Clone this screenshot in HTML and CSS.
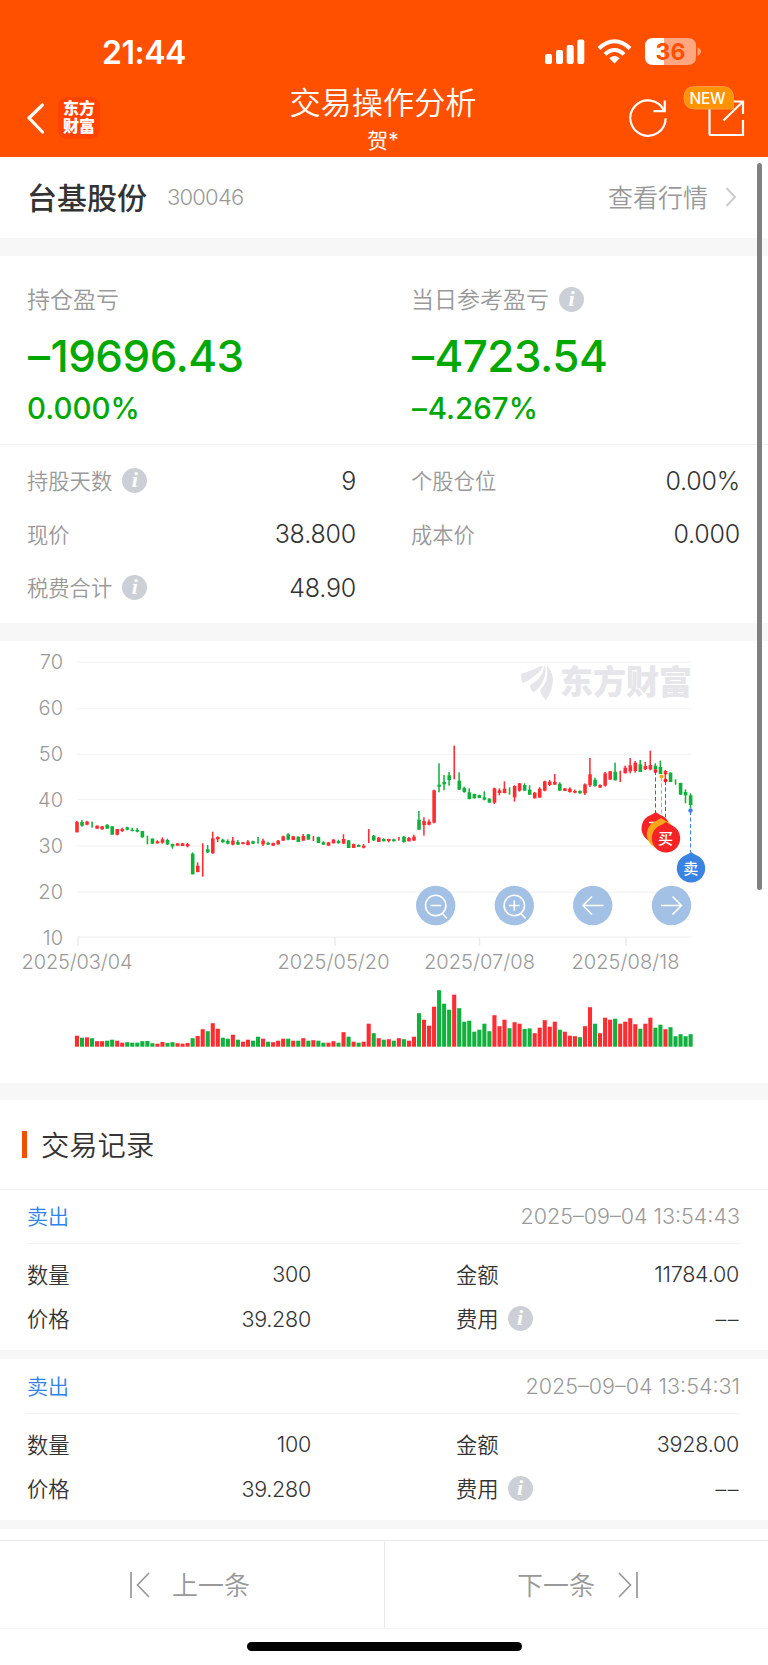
FILE: index.html
```html
<!DOCTYPE html>
<html lang="zh-CN">
<head>
<meta charset="utf-8">
<title>交易操作分析</title>
<link rel="stylesheet" href="styles.css">
</head>
<body>
<div class="page">
  <header class="header">
    <div class="status">
      <span class="clock">21:44</span>
      <svg class="status-icons" width="160" height="30" viewBox="544 36 160 30">
        <g fill="#fff">
          <rect x="545" y="54" width="7" height="10" rx="2"/>
          <rect x="556" y="50" width="7" height="14" rx="2"/>
          <rect x="566.7" y="45" width="7" height="19" rx="2"/>
          <rect x="577.3" y="39.5" width="7" height="24.5" rx="2"/>
          <path d="M614.5 63.5L609.3 58.3Q614.5 53.8 619.7 58.3Z"/>
        </g>
        <g fill="none" stroke="#fff" stroke-width="4">
          <path d="M599 48.5Q606.2 41.2 614.5 41.2T630 48.5"/>
          <path d="M605 54.4Q609.4 50 614.5 50T624 54.4"/>
        </g>
        <path d="M664 38H653.500Q645 38 645 46V57Q645 65 653.500 65H664Z" fill="#fff"/>
        <path d="M664 38H687.500Q696 38 696 46V57Q696 65 687.500 65H664Z" fill="#ffa780"/>
        <path d="M697.500 47.500Q701 49 701 51.500T697.500 56Z" fill="#ffa780"/>
        <text x="670.500" y="60" text-anchor="middle" class="battery">36</text>
      </svg>
    </div>
    <nav class="titlebar">
      <div class="side">
        <svg class="back" width="20" height="34" viewBox="0 0 20 34"><path d="M18.500 4L5 17L18.500 31" fill="none" stroke="#fff" stroke-width="3.200" stroke-linecap="round" stroke-linejoin="round"/></svg>
        <span class="brand">东方<br>财富</span>
      </div>
      <div class="heading"><h1>交易操作分析</h1><p>贺*</p></div>
      <svg class="actions" width="146" height="64" viewBox="622 82 146 64">
        <g fill="none" stroke="#fff" stroke-width="2.200">
          <path d="M664 110.500A17.700 17.700 0 1 0 665.700 118.300"/>
          <path d="M664.800 100.500V111.200H653.500"/>
          <path d="M709.500 106V133.500Q709.500 135 711 135H743V120M743 114V101.500H730M743 101.500L723.500 120.500"/>
        </g>
        <path d="M695 86.500H722Q733.500 86.500 733.500 98V109H695Q684 109 684 97.700T695 86.500Z" fill="#ff9300" stroke="#ff9a40" stroke-width="1"/>
        <text x="707.500" y="103.800" text-anchor="middle" textLength="36" class="new">NEW</text>
      </svg>
    </nav>
  </header>

  <section class="stock">
    <b>台基股份</b><span class="code">300046</span>
    <a class="quote">查看行情<svg width="12" height="22" viewBox="0 0 12 22"><path d="M1.500 2L10 11L1.500 20" fill="none" stroke="#ccc" stroke-width="2"/></svg></a>
  </section>

  <section class="summary">
    <div><div class="cap">持仓盈亏</div><div class="big"><span class="minus">–</span>19696.43</div><div class="pct">0.000%</div></div>
    <div><div class="cap">当日参考盈亏<i class="info">i</i></div><div class="big"><span class="minus">–</span>4723.54</div><div class="pct"><span class="minus">–</span>4.267%</div></div>
  </section>
  <section class="facts">
    <div class="fact"><span>持股天数<i class="info">i</i></span><em>9</em></div>
    <div class="fact"><span>个股仓位</span><em>0.00%</em></div>
    <div class="fact"><span>现价</span><em>38.800</em></div>
    <div class="fact"><span>成本价</span><em>0.000</em></div>
    <div class="fact"><span>税费合计<i class="info">i</i></span><em>48.90</em></div>
  </section>

  <section class="chart">
    <svg width="768" height="442" viewBox="0 641 768 442">
      <path d="M77 662.300H691M77 708.500H691M77 754.500H691M77 799.500H691M77 846H691M77 892.200H691M77 937H691" stroke="#f5f5f5" stroke-width="1.500" fill="none"/>
      <path d="M78 937V946M335 937V946M479.500 937V946M626 937V946" stroke="#ececec" stroke-width="1.500"/>
      <g class="axis" text-anchor="end">
        <text x="63" y="669">70</text><text x="63" y="715">60</text><text x="63" y="761">50</text><text x="63" y="807">40</text>
        <text x="63" y="852.500">30</text><text x="63" y="898.500">20</text><text x="63" y="944.500">10</text>
      </g>
      <g class="axis" text-anchor="middle">
        <text x="77" y="969" textLength="111">2025/03/04</text><text x="333.500" y="969" textLength="112">2025/05/20</text>
        <text x="479.500" y="969" textLength="111">2025/07/08</text><text x="625.500" y="969" textLength="108">2025/08/18</text>
      </g>
      <g fill="#e5e5ea">
        <path d="M521.500 674Q532 672 540 666Q536 678 523 683Q521 679 521.500 674Z"/>
        <path d="M521.500 674Q530 671 543 665.500Q541 674 522.500 683Q521 679 521.500 674Z"/>
        <path d="M544 665Q543.500 678 530 685Q530.500 690 533.500 692.500Q546 683 545.500 668Z"/>
        <path d="M547 665.500Q549.500 681 540 690.500Q541.500 696 546 700Q553 690 553 679Q552 671 547 665.500Z"/>
        <text x="560" y="694" textLength="132" lengthAdjust="spacingAndGlyphs" class="watermark">东方财富</text>
      </g>
      <g id="candles"></g>
      <g id="volumes"></g>

      <g fill="none" stroke-width="1" stroke-dasharray="4 2.500">
        <path d="M655.500 771V813" stroke="#f52326"/><path d="M661.500 777V818" stroke="#f8a51b"/><path d="M665.500 781V820" stroke="#f52326"/><path d="M690.500 811V852" stroke="#3983e2"/>
      </g>
      <circle cx="655.500" cy="771" r="2" fill="#f52326"/><circle cx="661.500" cy="776.500" r="2" fill="#f8a51b"/><circle cx="665.500" cy="780.500" r="2" fill="#f52326"/><circle cx="690.500" cy="810.500" r="2.200" fill="#3983e2"/>
      <defs><path id="pin" d="M0-16Q3-13.500 8-11.500A14.200 14.200 0 1 1-8-11.500Q-3-13.500 0-16Z"/></defs>
      <g class="pin-text" text-anchor="middle">
        <use href="#pin" x="655.700" y="828" fill="#f52326"/><path d="M649 822.500H657" stroke="#fff" stroke-width="1.500"/>
        <use href="#pin" x="661" y="834" fill="#f8a51b"/>
        <use href="#pin" x="666" y="838" fill="#f52326"/><text x="665.500" y="843.500">买</text>
        <use href="#pin" x="691" y="868" fill="#3983e2"/><text x="690.800" y="873.500">卖</text>
      </g>
      <g fill="#a3c1e4"><circle cx="435.700" cy="905.500" r="19.700"/><circle cx="514.300" cy="905.500" r="19.700"/><circle cx="592.700" cy="905.500" r="19.700"/><circle cx="671.500" cy="905.500" r="19.700"/></g>
      <g fill="none" stroke="#fff" stroke-width="1.600">
        <circle cx="435.700" cy="905.500" r="10.200"/><path d="M430.500 905.500H441M442.500 913.500L447 918.500"/>
        <circle cx="514.300" cy="905.500" r="10.200"/><path d="M509 905.500H519.500M514.300 900.300V910.800M521 913.500L525.500 918.500"/>
        <path d="M603.500 905.500H583M592 896.500L583 905.500L592 914.500M661 905.500H681.500M672.500 896.500L681.500 905.500L672.500 914.500"/>
      </g>
    </svg>
  </section>

  <h2 class="records-title">交易记录</h2>
  <article class="record">
    <div class="record-head"><span class="side-tag">卖出</span><time>2025–09–04 13:54:43</time></div>
    <div class="record-body">
      <div class="cell"><span>数量</span><em>300</em></div><div class="cell"><span>金额</span><em>11784.00</em></div>
      <div class="cell"><span>价格</span><em>39.280</em></div><div class="cell"><span>费用<i class="info">i</i></span><em class="none">––</em></div>
    </div>
  </article>
  <article class="record">
    <div class="record-head"><span class="side-tag">卖出</span><time>2025–09–04 13:54:31</time></div>
    <div class="record-body">
      <div class="cell"><span>数量</span><em>100</em></div><div class="cell"><span>金额</span><em>3928.00</em></div>
      <div class="cell"><span>价格</span><em>39.280</em></div><div class="cell"><span>费用<i class="info">i</i></span><em class="none">––</em></div>
    </div>
  </article>

  <footer class="footer">
    <div class="pager">
      <a class="prev"><svg width="22" height="28" viewBox="0 0 22 28"><path d="M2 1V27M20 2L8.500 14L20 26" fill="none" stroke="#999" stroke-width="1.700"/></svg><span>上一条</span></a>
      <a class="next"><span>下一条</span><svg width="22" height="28" viewBox="0 0 22 28"><path d="M20 1V27M2 2L13.500 14L2 26" fill="none" stroke="#999" stroke-width="1.700"/></svg></a>
    </div>
    <div class="home"></div>
  </footer>
  <div class="scrollbar"></div>
</div>
<script src="chart.js"></script>
</body>
</html>
```
FILE: styles.css
```css
* { box-sizing: border-box; }
body { margin: 0; background: #fff; font-family: Inter, "Noto Sans CJK SC", sans-serif; color: #333; }
h1, h2, p { margin: 0; font-weight: 400; }
em, time { font-style: normal; }
.page { position: relative; width: 768px; height: 1665px; display: flex; flex-direction: column; overflow: hidden; }

.header { height: 157px; background: #ff5000; color: #fff; flex: none; }
.status { height: 82px; display: flex; justify-content: space-between; padding: 36px 64px 0 102px; }
.clock { font-size: 32px; font-weight: 600; line-height: 33px; letter-spacing: -0.5px; }
.battery { font-size: 23px; font-weight: 700; fill: #ff5000; }
.titlebar { display: grid; grid-template-columns: 146px 1fr 146px; height: 75px; }
.side { display: flex; padding: 15px 0 0 24px; gap: 14px; }
.back { margin-top: 4px; }
.brand { width: 42px; height: 42px; border-radius: 9px; background: #ff4200; text-align: center; font-size: 16px; line-height: 17.500px; font-weight: 900; padding-top: 3px; }
.heading { text-align: center; padding: 1px 2px 0 0; }
.heading h1 { font-size: 31.200px; line-height: 40px; font-weight: 350; }
.heading p { font-size: 21px; line-height: 28px; margin-top: 4px; }
.actions { display: block; }
.new { font-size: 15.500px; font-weight: 500; fill: #fff; }

.stock { height: 99px; border-bottom: 18px solid #f7f7f7; display: flex; align-items: center; padding: 0 31px 3px 27px; flex: none; }
.stock b { font-size: 30px; font-weight: 500; }
.code { font-size: 22px; color: #999; margin: 2px 0 0 20px; font-weight: 300; letter-spacing: -0.8px; }
.quote { margin-left: auto; display: flex; align-items: center; font-size: 25px; color: #999; gap: 17px; font-weight: 350; }
.quote svg { margin-top: 1px; }

.summary { height: 189px; border-bottom: 1px solid #f3f3f3; display: grid; grid-template-columns: 384px 384px; padding: 28px 0 0; flex: none; }
.summary > div { padding-left: 27px; }
.cap { display: flex; align-items: center; font-size: 23px; line-height: 32px; color: #999; font-weight: 350; }
.info { width: 25px; height: 25px; border-radius: 50%; background: #ccd0d6; color: #fff; font: italic bold 22px/24px "Liberation Serif", serif; text-align: center; margin-left: 10px; flex: none; }
.cap .info { margin-bottom: 2px; }
.big { color: #00a800; font-size: 44px; line-height: 50px; font-weight: 550; margin-top: 15px; letter-spacing: -0.55px; }
.minus { margin-right: 1px; margin-left: 1px; }
.pct { color: #00a800; font-size: 29.500px; line-height: 36px; font-weight: 500; margin-top: 9px; }

.facts { height: 196px; border-bottom: 18px solid #f7f7f7; display: grid; grid-template-columns: 384px 384px; grid-auto-rows: 53.500px; padding-top: 9px; flex: none; }
.fact, .cell { display: flex; justify-content: space-between; align-items: center; }
.fact { padding: 0 28px 0 27px; font-size: 25px; }
.fact span { display: flex; align-items: center; font-size: 21.300px; color: #999; font-weight: 350; padding-bottom: 2px; }
.fact .info { margin-top: 2px; }
.fact em { font-weight: 350; letter-spacing: -0.2px; }

.chart { height: 459px; border-bottom: 17px solid #f7f7f7; flex: none; }
.chart svg { display: block; }
.axis { font-size: 20px; font-weight: 300; fill: #999; }
.watermark { font-size: 33px; font-weight: 900; }
.pin-text { font-size: 15px; font-weight: 500; fill: #fff; }

.records-title { height: 89px; flex: none; display: flex; align-items: center; gap: 14px; padding: 0 0 2px 22px; font-size: 28.300px; font-weight: 350; }
.records-title::before { content: ""; width: 5px; height: 27px; background: #f05000; margin-top: 2px; }
.record { height: 170px; flex: none; border-top: 1px solid #f3f3f3; border-bottom: 9px solid #f7f7f7; padding: 0 28px 0 27px; }
.record + .record { border-top-color: #fff; }
.record-head { height: 54px; display: flex; justify-content: space-between; align-items: center; border-bottom: 1px solid #f3f3f3; font-size: 21.500px; font-weight: 300; padding-bottom: 2px; }
.side-tag { color: #2f82ea; font-size: 21px; font-weight: 350; padding-bottom: 2px; }
.record-head time { color: #999; }
.record-body { display: grid; grid-template-columns: 284px 283px; column-gap: 145px; grid-auto-rows: 44.500px; padding-top: 8px; }
.cell { font-size: 21.500px; }
.cell span { display: flex; align-items: center; font-size: 21.300px; font-weight: 350; padding-bottom: 2px; }
.cell .info { margin: 2px 0 0 9px; }
.cell em { font-weight: 350; letter-spacing: -0.25px; }
.cell .none { letter-spacing: 1.500px; margin-right: -1px; }

.footer { margin-top: auto; height: 125px; flex: none; background: #fff; border-top: 1px solid #eaeaea; }
.pager { height: 88px; display: grid; grid-template-columns: 385px 383px; border-bottom: 1px solid #f5f5f5; font-size: 26px; font-weight: 350; color: #999; }
.pager a { display: flex; align-items: center; }
.pager span { padding-bottom: 2px; }
.prev { padding-left: 129px; gap: 21px; border-right: 1px solid #eaeaea; }
.next { padding-left: 132px; gap: 22px; }
.home { width: 275px; height: 9px; border-radius: 5px; background: #000; margin: 13px auto 0; }
.scrollbar { position: absolute; left: 757px; top: 163px; width: 5px; height: 727px; border-radius: 3px; background: #808080; }
```
FILE: chart.js
```js
// Per trading day: direction, volume bar height, then high, body top, body bottom, low
// in thirds of a pixel below y=640. Days with only high and low are drawn as a thin line.
var days = `r 11 543 546 577 577|g 9 540 546 557 560|r 9.3 543 545 554 556|g 8.5 545 563|r 5.5 556 557 566 566|r 5.5 558 559 568 569|g 6 552 555 566 567|g 7 558 559 584 584|r 6 567 567 584 586|r 4 563 567 573 576
g 4.5 560 562 569 571|g 4 563 569 573 574|g 4 564 570 575 577|g 5.5 573 573 592 593|g 5.7 587 613|g 3.5 595 596 611 612|r 3 601 604 610 611|r 4.7 592 598 608 611|g 3.7 596 600 613 615|g 4.5 611 612 619 626
r 3.5 609 610 617 617|r 3 609 610 618 618|r 3.7 609 612 619 622|g 8.5 637 641 703 703|r 10.7 667 677 696 697|r 17.5 610 710|g 15.5 615 628 637 639|r 23.5 575 595 640 641|r 18 589 591 598 606|g 9 596 599 607 608
g 8 598 603 611 613|r 12 591 602 614 616|g 7 600 606 614 615|r 5 606 607 612 613|r 7 600 605 615 616|g 6 602 604 611 612|g 10 591 611|r 8 596 602 613 618|g 5 605 609 614 615|r 4.5 608 609 617 618
r 6 600 602 613 614|r 8 587 589 602 603|g 8 580 583 599 601|r 6 588 589 600 600|g 6 589 590 606 606|r 8.5 582 588 602 602|g 6 582 583 599 599|r 6.5 588 603|g 6 590 591 609 609|g 4 604 607 614 614
r 4 606 607 617 617|r 5.5 597 599 610 610|g 4 599 603 610 610|r 14.5 583 597 611 611|g 10 600 601 624 624|r 5 611 612 624 624|g 4 613 615 621 621|r 5 612 617 623 625|r 23 567 609|g 13.5 585 587 601 603
r 8.5 591 593 606 606|g 7 595 597 604 604|r 7.5 596 597 603 607|g 6 596 598 604 604|r 8.5 591 602|g 7.5 588 590 606 608|r 6 591 594 604 604|r 10 584 590 602 602|g 33.5 513 539 569 569|r 27 532 543 555 587
r 21 538 545 554 556|r 40 449 451 548 550|g 56.5 370 434 440 457|g 43 405 426 433 451|g 37 396 406 420 437|r 52 317 418|g 38.5 397 422 449 450|g 25 440 444 456 458|g 26 445 457 477 478|g 15 461 462 475 475
g 17 464 465 474 474|g 23 454 472 479 481|g 15.5 475 476 488 488|r 31.5 443 445 488 492|r 20.5 445 451 459 466|r 27 424 446 459 460|g 18.5 442 464|r 24.5 436 438 472 485|r 23 429 430 452 455|g 17.7 430 435 452 452
g 18.3 436 449 464 465|r 13.5 456 458 475 475|r 19 442 446 473 473|r 26.5 422 424 452 454|r 20 420 425 435 438|r 25 402 426 434 434|g 17 427 431 452 452|r 15 444 445 453 453|r 11 442 446 456 458|r 10.5 449 453 458 460
g 9.5 451 453 460 461|r 20.5 430 433 460 465|r 39.5 354 403 436 441|g 23 413 419 438 440|r 13.5 433 435 443 443|r 29 396 400 437 440|r 27 393 394 419 419|g 28 368 395 421 421|r 23 392 426|r 25 377 383 400 400
r 28.5 354 376 394 400|r 22.5 363 368 393 398|g 18 360 373 396 396|r 23 366 378 388 390|r 29 332 375 388 391|g 19 370 377 388 388|g 22 362 381 402 402|r 17.5 390 393 403 420|g 19.5 397 398 426 426|g 10.5 418 434
g 12.5 428 429 464 464|g 10.5 448 456 466 490|g 12.5 460 466 495 505`.split(/[|\n]/);

var NS = "http://www.w3.org/2000/svg";
var colors = { r: "#ff2d32", g: "#12b03c" };
var candles = document.getElementById("candles");
var volumes = document.getElementById("volumes");

function bar(parent, x, y, w, h, fill) {
  var r = document.createElementNS(NS, "rect");
  r.setAttribute("x", x.toFixed(2));
  r.setAttribute("y", y.toFixed(2));
  r.setAttribute("width", w);
  r.setAttribute("height", h.toFixed(2));
  r.setAttribute("fill", fill);
  parent.appendChild(r);
}

days.forEach(function (line, i) {
  var p = line.split(" ");
  var fill = colors[p[0]];
  var v = p.slice(2).map(function (n) { return 640 + n / 3; });
  var x = 77 + 5.03 * i;
  bar(volumes, x - 2.1, 1046.7 - p[1], 4.1, +p[1], fill);
  if (v.length === 2) {
    bar(candles, x - 0.8, v[0], 1.6, v[1] - v[0], fill);
  } else {
    bar(candles, x - 1.8, v[1], 3.6, v[2] - v[1], fill);
    bar(candles, x - 0.9, v[0], 1.5, v[3] - v[0], fill);
  }
});
```
